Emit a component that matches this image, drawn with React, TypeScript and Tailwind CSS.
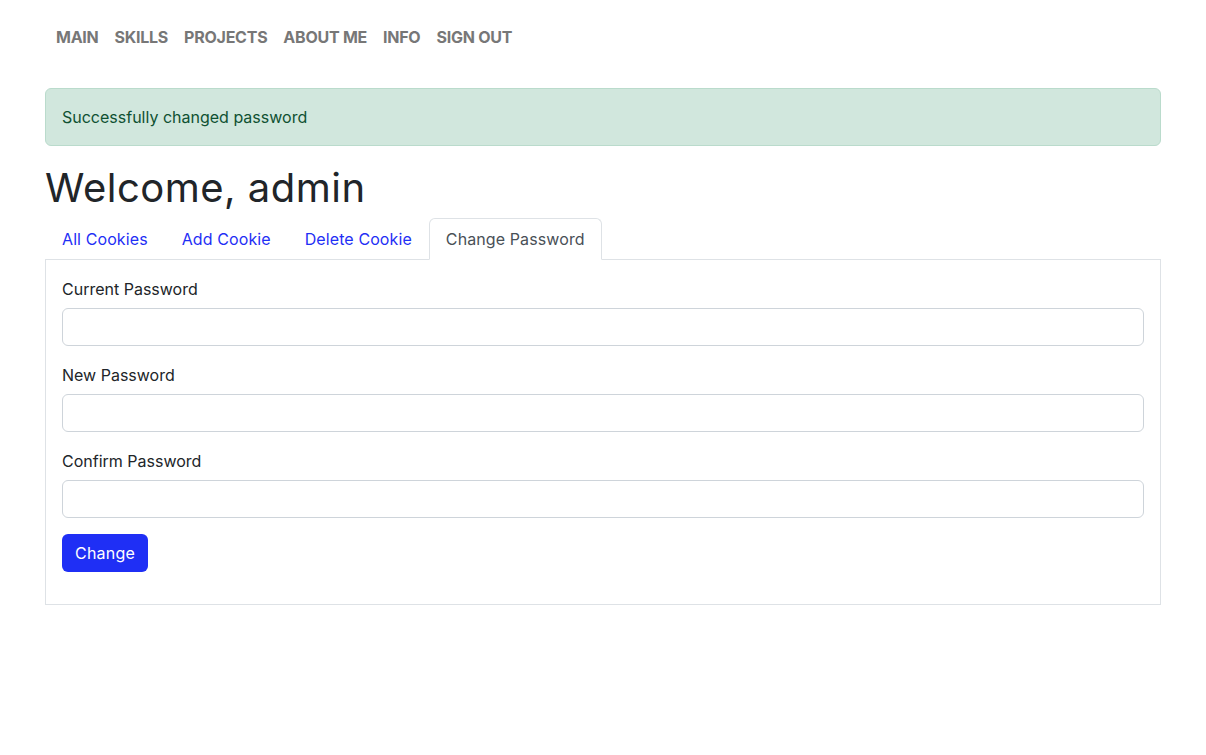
import React from "react";

const font = { fontFamily: "Inter, 'Noto Sans', sans-serif" };

const navLinks = ["MAIN", "SKILLS", "PROJECTS", "ABOUT ME", "INFO", "SIGN OUT"];
const tabs = ["All Cookies", "Add Cookie", "Delete Cookie", "Change Password"];
const fields = ["Current Password", "New Password", "Confirm Password"];

export default function App() {
  return (
    <div className="min-h-screen bg-white text-[#212529]" style={font}>
      <div className="mx-auto max-w-[1140px] px-3">
        <nav className="pt-[25px] pb-[15px]">
          <ul className="flex pl-[3px]">
            {navLinks.map((l) => (
              <li key={l} className="px-2 text-base leading-6 font-bold text-[#777777] tracking-[-0.25px]">
                {l}
              </li>
            ))}
          </ul>
        </nav>

        <div className="mt-6 mb-4 rounded-md border border-[#badbcc] bg-[#d1e7dd] px-4 py-4 text-base leading-6 text-[#0f5132]">
          Successfully changed password
        </div>

        <h1 className="pt-[2px] mb-[6px] text-[40px] leading-[48px] font-normal tracking-[0.5px]">Welcome, admin</h1>

        <ul className="flex">
          {tabs.map((t, i) => {
            const active = i === tabs.length - 1;
            return (
              <li
                key={t}
                className={
                  active
                    ? "relative z-10 rounded-t-md border border-[#dee2e6] border-b-white bg-white px-4 py-2 text-base leading-6 text-[#495057] tracking-[0.1px]"
                    : "border border-transparent px-4 py-2 text-base leading-6 text-[#1f2ff5] tracking-[0.1px]"
                }
              >
                {t}
              </li>
            );
          })}
        </ul>

        <div className="-mt-px border border-[#dee2e6] p-4">
          {fields.map((f) => (
            <div key={f} className="mb-4">
              <label className="block pt-px mb-[7px] text-base leading-6">{f}</label>
              <input
                type="password"
                className="block h-[38px] w-full rounded-md border border-[#ced4da] bg-white px-3 outline-none"
              />
            </div>
          ))}
          <button className="mb-4 h-[38px] rounded-md bg-[#1f2ff5] px-[13px] text-base leading-6 text-white tracking-[0.2px]">
            Change
          </button>
        </div>
      </div>
    </div>
  );
}
